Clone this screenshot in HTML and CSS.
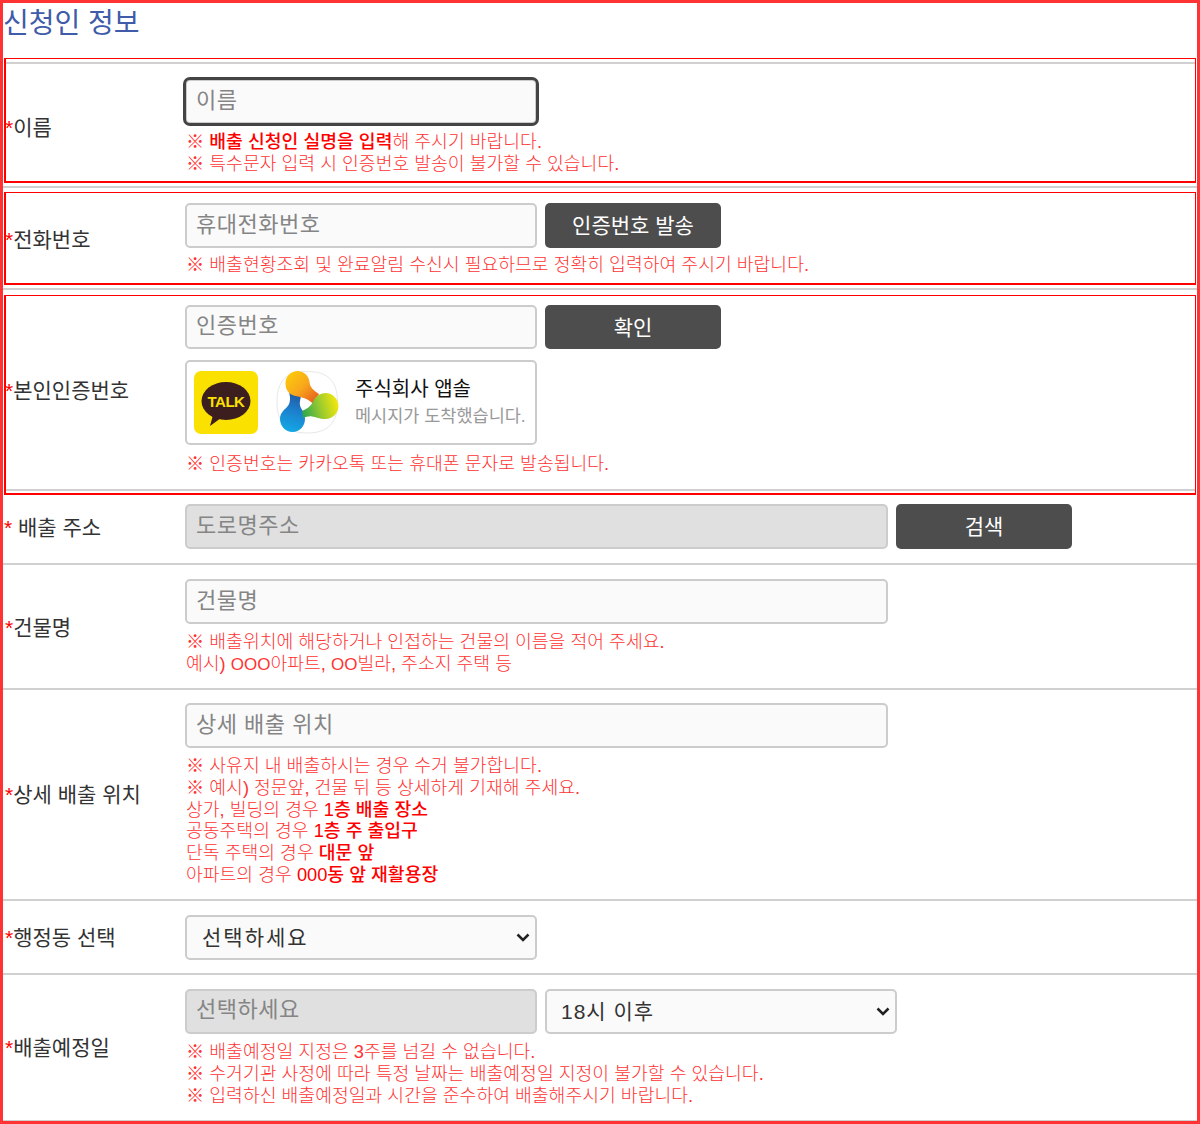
FILE: index.html
```html
<!DOCTYPE html>
<html lang="ko">
<head>
	<meta charset="UTF-8">
	<title>신청인 정보</title>
	<link rel="stylesheet" href="styles.css">
</head>
<body>
	<div class="frame">
		<h2 class="title">신청인 정보</h2>

		<div class="mark mark-first">
			<div class="row row-name">
				<label class="label"><i>*</i>이름</label>
				<div class="field">
					<input type="text" class="box box-focus" placeholder="이름">
					<p class="note">※ <b>배출 신청인 실명을 입력</b>해 주시기 바랍니다.<br>※ 특수문자 입력 시 인증번호 발송이 불가할 수 있습니다.</p>
				</div>
			</div>
		</div>
		<div class="sep"></div>

		<div class="mark">
			<div class="row row-tight">
				<label class="label"><i>*</i>전화번호</label>
				<div class="field">
					<div class="line">
						<input type="text" class="box" placeholder="휴대전화번호">
						<button type="button" class="btn">인증번호 발송</button>
					</div>
					<p class="note">※ 배출현황조회 및 완료알림 수신시 필요하므로 정확히 입력하여 주시기 바랍니다.</p>
				</div>
			</div>
		</div>
		<div class="sep sep-wide"></div>

		<div class="mark">
			<div class="row row-auth">
				<label class="label"><i>*</i>본인인증번호</label>
				<div class="field">
					<div class="line">
						<input type="text" class="box" placeholder="인증번호">
						<button type="button" class="btn">확인</button>
					</div>
					<div class="msg">
						<svg class="kakao" viewBox="0 0 64 63">
							<rect width="64" height="63" rx="7" fill="#fae100"/>
							<ellipse cx="32" cy="30" rx="24.500" ry="19" fill="#3c1e1e"/>
							<path d="M19 44l-3 11 11-8z" fill="#3c1e1e"/>
							<text x="32" y="36" class="kakao-text">TALK</text>
						</svg>
						<svg class="app" viewBox="0 0 66 66">
							<defs>
								<linearGradient id="gradTop" x1="0.1" y1="0.1" x2="0.9" y2="0.9">
									<stop offset="0" stop-color="#fdc80c"/>
									<stop offset="0.5" stop-color="#f8a81b"/>
									<stop offset="1" stop-color="#e8621f"/>
								</linearGradient>
								<linearGradient id="gradBlue" x1="0.6" y1="0" x2="0.4" y2="1">
									<stop offset="0" stop-color="#24569f"/>
									<stop offset="0.45" stop-color="#1c7fcc"/>
									<stop offset="1" stop-color="#14a9e6"/>
								</linearGradient>
								<linearGradient id="gradGreen" x1="0" y1="0.6" x2="1" y2="0.4">
									<stop offset="0" stop-color="#2fa84f"/>
									<stop offset="0.5" stop-color="#9ccb2e"/>
									<stop offset="1" stop-color="#f6e80c"/>
								</linearGradient>
							</defs>
							<path d="M34 1.500C55 1.500 64.500 11 64.500 32S55 63 34 63 4 53 4 32 13 1.500 34 1.500z" fill="#fff" stroke="#e8e8e8"/>
							<path d="M16 22L28 26C27 31 26 34 28 38C30 41 32 45 32 49C32 56 26.500 62 19.500 62C12.500 62 7 56 7 49C7 43 11 40 14 37C17 34 18 29 16 22z" fill="url(#gradBlue)"/>
							<path d="M24.500 1C31 1 36 6 36.500 12C37 17 40 20 46 24L40 33.500C36 30 32 28 27 27C22 26 12.500 25 12.500 13C12.500 6 18 1 24.500 1z" fill="url(#gradTop)"/>
							<path d="M29 41C34 39 38 36 40 32C42 26.500 47 23 52.500 23C59.500 23 65.500 29 65.500 36C65.500 43 59.500 49 52.500 49C46 49 43 47 39 46.500C36 46 33 47 30 48z" fill="url(#gradGreen)"/>
						</svg>
						<div class="msg-text">
							<strong>주식회사 앱솔</strong>
							<span>메시지가 도착했습니다.</span>
						</div>
					</div>
					<p class="note note-auth">※ 인증번호는 카카오톡 또는 휴대폰 문자로 발송됩니다.</p>
				</div>
			</div>
			<div class="sep sep-last"></div>
		</div>

		<div class="row row-line row-addr">
			<label class="label"><i>*</i> 배출 주소</label>
			<div class="field">
				<div class="line">
					<input type="text" class="box box-wide box-off" placeholder="도로명주소" readonly>
					<button type="button" class="btn">검색</button>
				</div>
			</div>
		</div>

		<div class="row row-line row-notes">
			<label class="label"><i>*</i>건물명</label>
			<div class="field">
				<input type="text" class="box box-wide" placeholder="건물명">
				<p class="note">※ 배출위치에 해당하거나 인접하는 건물의 이름을 적어 주세요.<br>예시) <span class="ooo">OOO</span>아파트, <span class="ooo">OO</span>빌라, 주소지 주택 등</p>
			</div>
		</div>

		<div class="row row-line row-detail">
			<label class="label"><i>*</i>상세 배출 위치</label>
			<div class="field">
				<input type="text" class="box box-wide" placeholder="상세 배출 위치">
				<p class="note">※ 사유지 내 배출하시는 경우 수거 불가합니다.<br>※ 예시) 정문앞, 건물 뒤 등 상세하게 기재해 주세요.<br>상가, 빌딩의 경우 <b>1층 배출 장소</b><br>공동주택의 경우 <b>1층 주 출입구</b><br>단독 주택의 경우 <b>대문 앞</b><br>아파트의 경우 <b>000동 앞 재활용장</b></p>
			</div>
		</div>

		<div class="row row-line">
			<label class="label"><i>*</i>행정동 선택</label>
			<div class="field">
				<select class="box select">
					<option>선택하세요</option>
				</select>
			</div>
		</div>

		<div class="row row-line">
			<label class="label"><i>*</i>배출예정일</label>
			<div class="field">
				<div class="line">
					<input type="text" class="box box-off" placeholder="선택하세요" readonly>
					<select class="box select">
						<option>18시 이후</option>
					</select>
				</div>
				<p class="note">※ 배출예정일 지정은 3주를 넘길 수 없습니다.<br>※ 수거기관 사정에 따라 특정 날짜는 배출예정일 지정이 불가할 수 있습니다.<br>※ 입력하신 배출예정일과 시간을 준수하여 배출해주시기 바랍니다.</p>
			</div>
		</div>
	</div>
</body>
</html>
```

FILE: styles.css
```css
* {
	box-sizing: border-box;
}
body {
	margin: 0;
	background: #fff;
	font-family: "Liberation Sans", "Noto Sans CJK KR", sans-serif;
	color: #333;
}
.frame {/*the outermost red frame*/
	width: 1200px;
	height: 1124px;
	border: 3px solid #f33;
	overflow: hidden;
}
.title {
	height: 55px;
	margin: 0;
	padding: 3px 0 0;
	font-size: 28px;
	line-height: 36px;
	font-weight: 400;
	color: #3f5ba9;
}
.mark {/*thin red boxes around the first three rows*/
	margin: 0 1px;
	border: 1px solid #f00;
	border-left-width: 2px;
	border-bottom-width: 2px;
}
.mark-first {
	padding-top: 3px;
}
.mark-first .row {
	border-top: 2px solid #d0d0d0;
}
.sep {
	height: 2px;
	margin: 3px 0 4px;
	background: #d0d0d0;
}
.sep-wide {
	margin-bottom: 5px;
}
.sep-last {
	margin: 0 0 2px;
}
.row {
	display: grid;
	grid-template-columns: 179px 1fr;
	align-items: center;
}
.row-name {
	padding: 15px 0 6px;
}
.row-tight {
	padding: 10px 0 7px;
}
.row-tight .note {
	margin-top: 6px;
}
.row-auth {
	padding: 9px 0 14px;
}
.row-auth .box,
.row-auth .btn {
	height: 44px;
}
.row-line {
	padding: 14px 0 13px;
	border-bottom: 2px solid #d0d0d0;
	grid-template-columns: 182px 1fr;
}
.row-addr {
	padding: 9px 0 14px;
}
.row-notes {
	padding-bottom: 12px;
}
.row-detail {
	padding: 13px 0 13px;
}
.row-detail .note {
	line-height: 21.800px;
}
.label {
	padding-top: 1px;
	font-size: 21px;
	line-height: 28px;
	color: #333;
}
.mark .label {
	margin-left: -1px;
}
.row-line .label {
	padding-left: 2px;
}
.row-addr .label {
	padding: 3px 0 0 1px;
}
.label i {
	color: #f00;
	font-style: normal;
}
.line {
	display: flex;
	gap: 8px;
}
.box {
	display: block;
	width: 352px;
	height: 45px;
	padding: 0 9px 2px;
	border: 2px solid #ccc;
	border-radius: 5px;
	background: #fafafa;
	font-family: inherit;
	font-size: 22px;
	letter-spacing: 0.5px;
	color: #333;
}
.box::placeholder {
	color: #858585;
}
.box-focus {
	outline: 3px solid #444;
	outline-offset: -1px;
}
.box-wide {
	width: 703px;
}
.box-off {
	background: #e0e0e0;
}
.select {
	padding: 0 11px 0 15px;
	appearance: none;
	background: #fafafa url("data:image/svg+xml,%3Csvg xmlns='http://www.w3.org/2000/svg' width='14' height='9'%3E%3Cpath d='M1.500 1.500L7 7l5.500-5.500' fill='none' stroke='%23222' stroke-width='2.500'/%3E%3C/svg%3E") no-repeat right 5px center;
	font-size: 21px;
	letter-spacing: 2px;
	color: #333;
}
.line .select {
	padding-left: 14px;
	letter-spacing: 1px;
}
.btn {
	width: 176px;
	height: 45px;
	padding: 0 0 3px;
	border: 0;
	border-radius: 5px;
	background: #4d4d4d;
	font-family: inherit;
	font-size: 21px;
	color: #fff;
}
.note {
	margin: 7px 0 0;
	padding-left: 1px;
	font-size: 18.25px;
	font-weight: 300;
	line-height: 22px;
	color: #f33;
}
.note-auth {
	margin-top: 8px;
}
.note b {
	color: #f00;
	font-weight: 500;
}
.ooo {/*the round letters are narrower in the original*/
	font-size: 17px;
}
.msg {/*the message preview box*/
	display: flex;
	align-items: center;
	width: 352px;
	height: 85px;
	margin-top: 11px;
	padding-left: 7px;
	border: 2px solid #ccc;
	border-radius: 5px;
}
.kakao {
	width: 64px;
	height: 63px;
}
.kakao-text {
	font-family: "Liberation Sans", sans-serif;
	font-size: 15px;
	font-weight: 700;
	fill: #fae100;
	text-anchor: middle;
	letter-spacing: -0.500px;
}
.app {
	width: 66px;
	height: 66px;
	margin-left: 15px;
}
.msg-text {
	display: flex;
	flex-direction: column;
	margin-left: 16px;
}
.msg-text strong {
	font-size: 20px;
	line-height: 27px;
	font-weight: 400;
	color: #111;
}
.msg-text span {
	font-size: 17.5px;
	line-height: 26px;
	color: #999;
}
```
